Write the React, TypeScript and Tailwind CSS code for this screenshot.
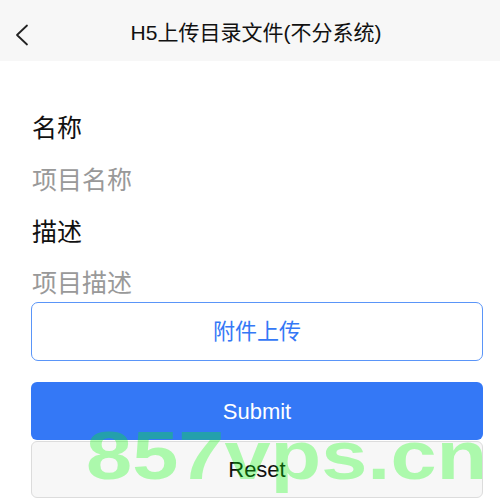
import React from "react";

const font = { fontFamily: '"Liberation Sans", "Noto Sans CJK SC", sans-serif' };

const BackIcon = () => (
  <svg width="16" height="22" viewBox="0 0 16 22" fill="none">
    <path d="M13 1.5L3 11l10 9.5" stroke="#222" strokeWidth="1.8" strokeLinecap="round" strokeLinejoin="round" />
  </svg>
);

export default function App() {
  return (
    <div
      className="relative w-[500px] h-[504px] overflow-hidden bg-white text-[#111]"
      style={font}
    >
      {/* Header */}
      <div className="h-[61px] bg-[#f7f7f7] flex items-center relative">
        <button className="absolute left-[14px] top-[24px] p-0">
          <BackIcon />
        </button>
        <div className="flex-1 text-center text-[21px] leading-none pl-[12px] pt-[4px]">
          H5上传目录文件(不分系统)
        </div>
      </div>

      {/* Form */}
      <div className="pt-[42px] pl-[31px] pr-[17px]">
        <div className="h-[52px] flex items-center pl-[1px] text-[25px]">名称</div>
        <div className="h-[52px] flex items-center pl-[1px] text-[25px] text-[#999]">项目名称</div>
        <div className="h-[52px] flex items-center pl-[1px] text-[25px]">描述</div>
        <div className="h-[43px] pt-[5px] pl-[1px] text-[25px] leading-[38px] text-[#999]">项目描述</div>

        <button className="w-full h-[59px] border border-[#5a95f8] rounded-[7px] bg-white text-[#3478f6] text-[22px] flex items-center justify-center">
          附件上传
        </button>

        <button className="mt-[21px] w-full h-[58px] rounded-[6px] bg-[#3478f6] text-white text-[22px] flex items-center justify-center">
          Submit
        </button>

        <button className="mt-[1px] w-full h-[57px] rounded-[6px] border border-[#dcdcdc] bg-[#f7f7f7] text-[#111] text-[22px] flex items-center justify-center">
          Reset
        </button>
      </div>

      {/* Watermark */}
      <div
        className="absolute left-[86px] top-[421px] text-[68px] leading-none font-bold text-[rgba(0,255,0,0.3)] pointer-events-none whitespace-nowrap origin-left scale-x-[1.22]"
        style={{ fontFamily: '"Liberation Sans", sans-serif' }}
      >
        857vps.cn
      </div>
    </div>
  );
}
